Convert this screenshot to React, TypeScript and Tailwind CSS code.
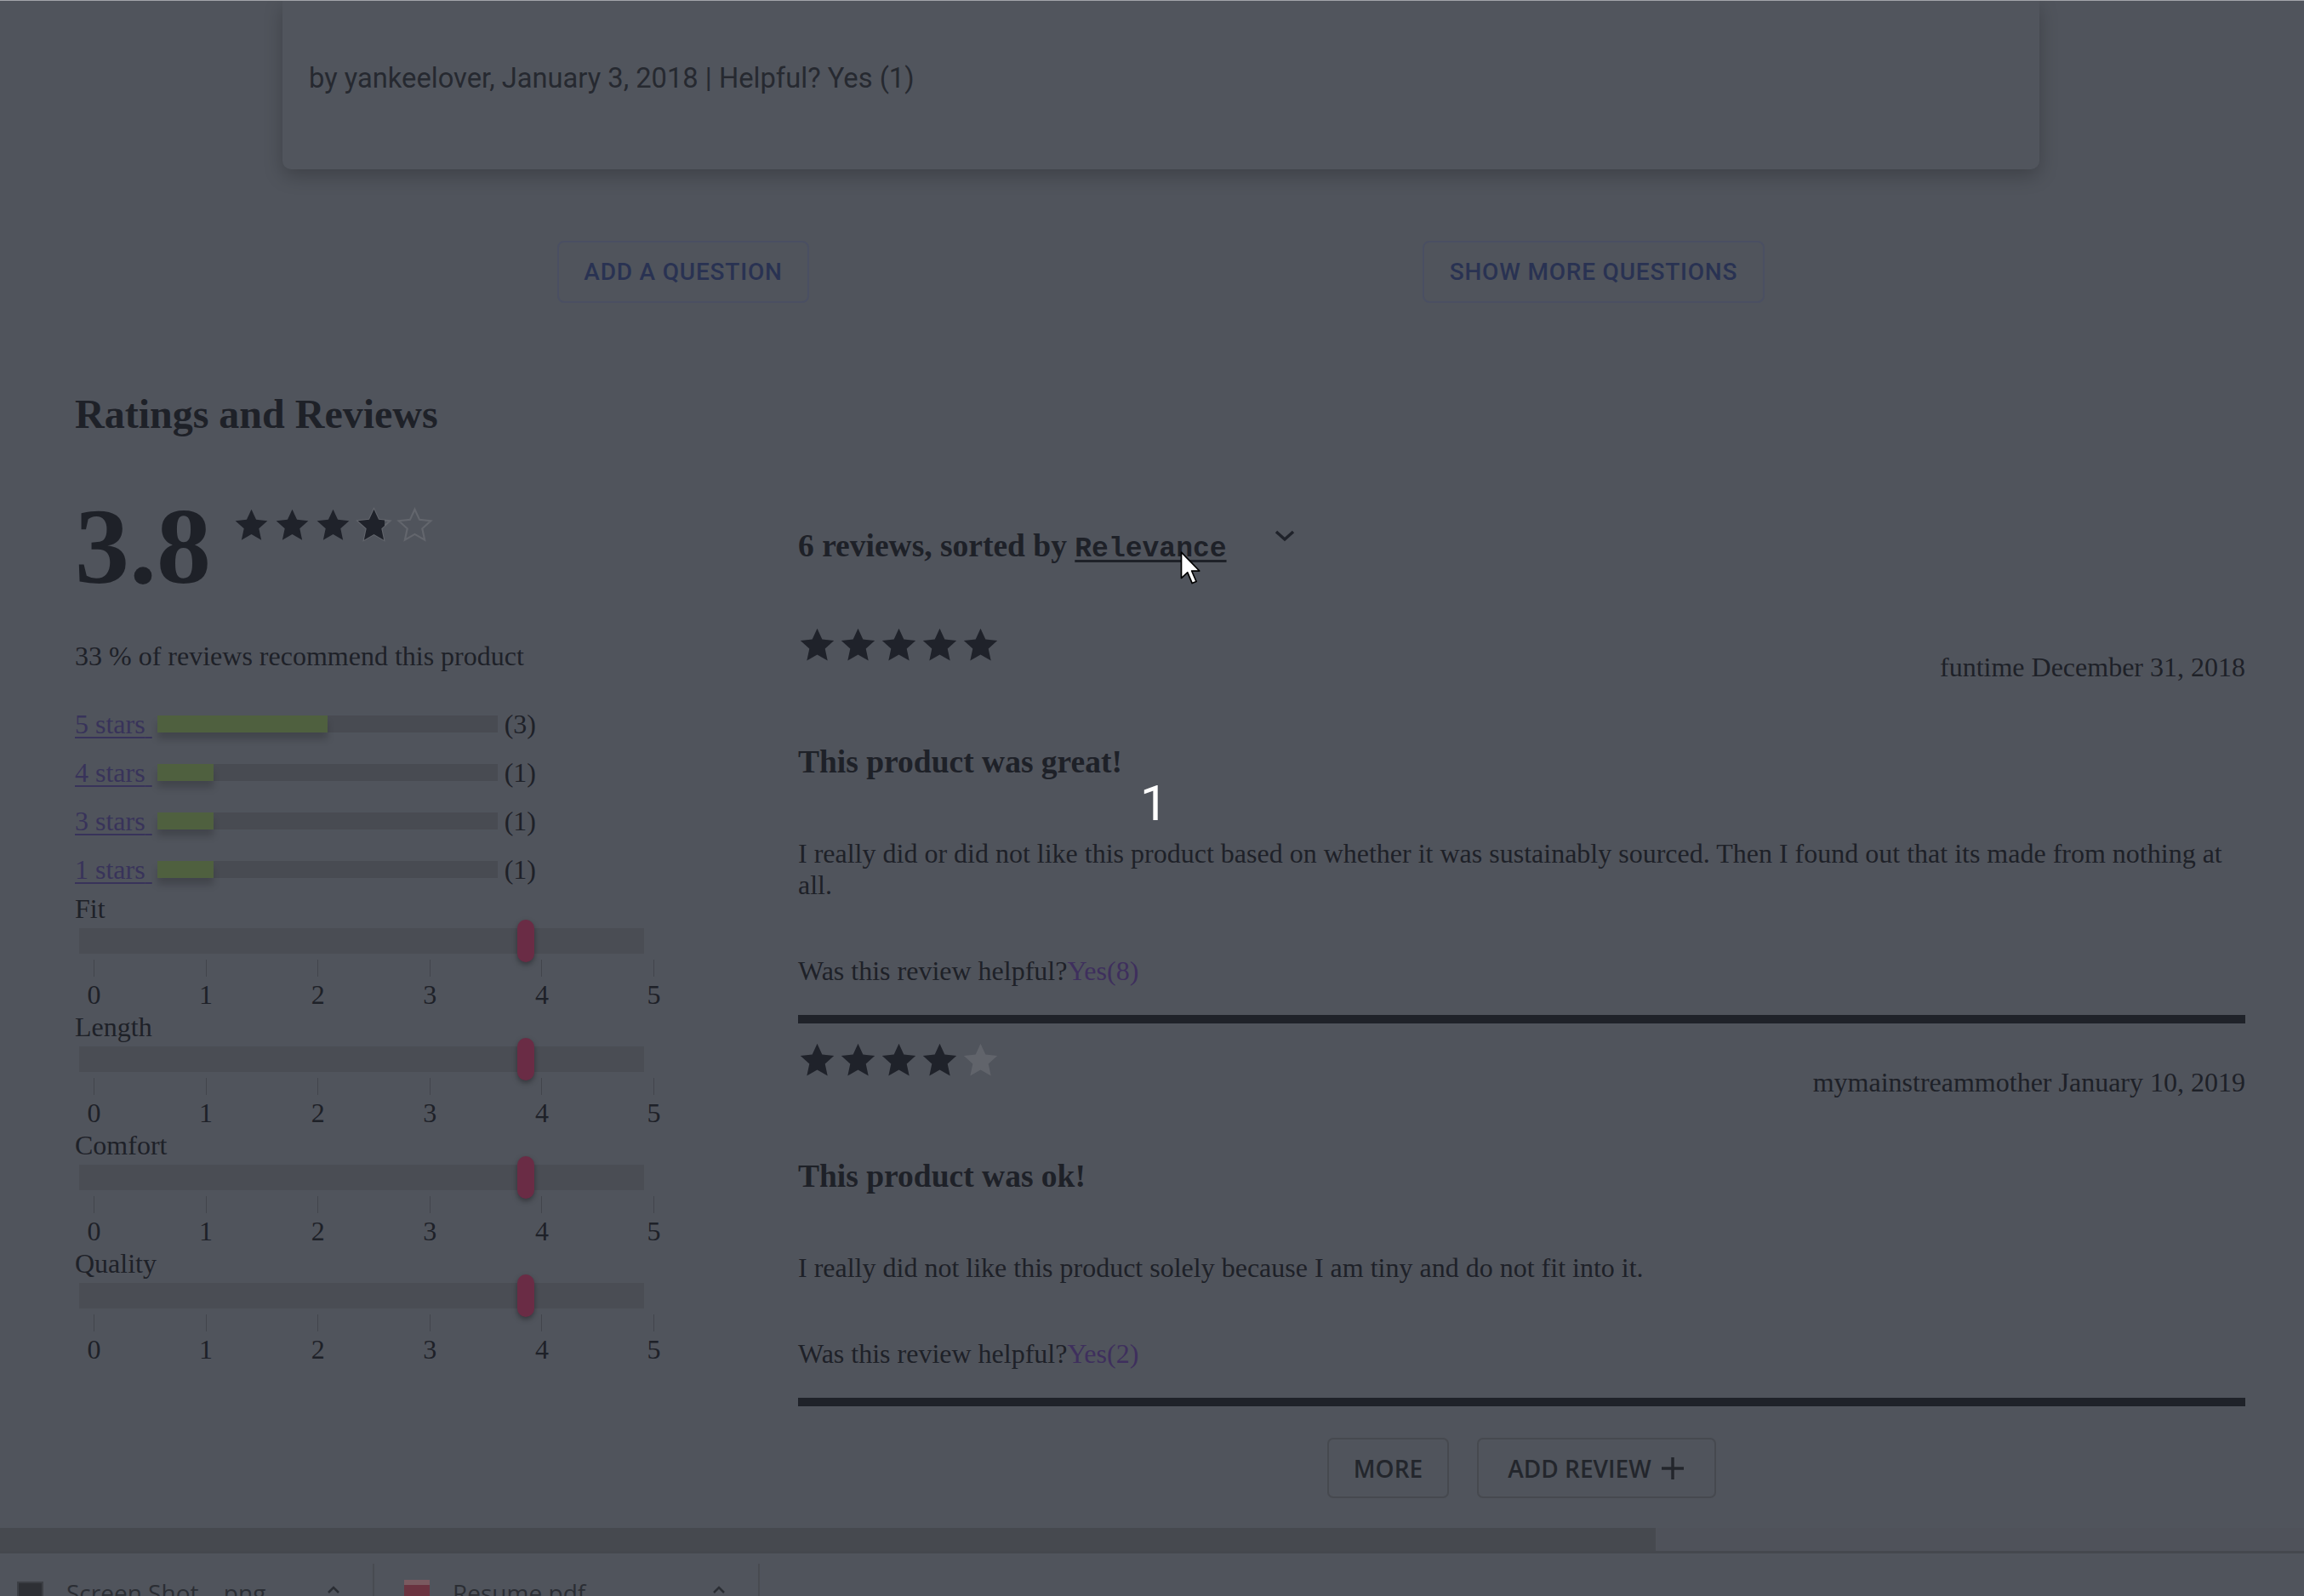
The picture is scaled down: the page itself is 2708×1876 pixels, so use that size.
import React from 'react';

const serif = "font-['Liberation_Serif',serif]";
const ink = '#1f222a';

function Star({ size, color, outline }: { size: number; color: string; outline?: boolean }) {
  return (
    <svg width={size} height={size} viewBox="0 0 24 24" className="block shrink-0">
      <polygon
        points="12,1.5 15.1,8.3 22.5,9.1 16.9,14.1 18.5,21.6 12,17.8 5.5,21.6 7.1,14.1 1.5,9.1 8.9,8.3"
        fill={outline ? 'none' : color}
        stroke={color}
        strokeWidth={outline ? 1.2 : 0}
      />
    </svg>
  );
}

function StarRow({ filled }: { filled: number }) {
  return (
    <div className="flex gap-[3px]">
      {[0, 1, 2, 3, 4].map((i) => (
        <Star key={i} size={45} color={i < filled ? ink : '#61646b'} />
      ))}
    </div>
  );
}

function BarRow({ label, pct, count }: { label: string; pct: number; count: number }) {
  return (
    <div className="h-[57px] flex items-center">
      <span className="underline decoration-[2px] underline-offset-[4px] text-[#38335a]">{label}&nbsp;</span>
      <div className="ml-[6px] w-[400px] h-[20px] bg-[#484b52]">
        <div className="h-full bg-[#4f603f] shadow-[0_8px_8px_rgba(0,0,0,0.18)]" style={{ width: `${pct}%` }} />
      </div>
      <span className="ml-[8px]">({count})</span>
    </div>
  );
}

function Slider({ label }: { label: string }) {
  return (
    <div className="w-[720px] mb-[1px]">
      <div className="h-[37px] leading-[37px]">{label}</div>
      <div className="relative mt-[4px] ml-[5px] w-[664px] h-[30px] bg-[#4a4d54]">
        <div className="absolute left-[515px] top-[-10px] w-[20px] h-[50px] rounded-full bg-[#6a2c45] shadow-[0_3px_6px_rgba(0,0,0,0.35)]" />
      </div>
      <div className="mt-[7px] ml-[22px] w-[659px] h-[20px] flex justify-between">
        {[0, 1, 2, 3, 4, 5].map((n) => (
          <div key={n} className="w-px h-full bg-[#42454c]" />
        ))}
      </div>
      <div className="mt-[3px] ml-[22px] w-[659px] h-[37px] leading-[37px] flex justify-between">
        {[0, 1, 2, 3, 4, 5].map((n) => (
          <div key={n} className="w-px flex justify-center">{n}</div>
        ))}
      </div>
    </div>
  );
}

function Review({ stars, who, title, body, yes, first }: { stars: number; who: string; title: string; body: React.ReactNode; yes: number; first?: boolean }) {
  return (
    <div>
      <div className={`h-[67px] flex justify-between ${first ? 'mt-[73px]' : 'mt-[21px]'}`}>
        <StarRow filled={stars} />
        <div className="self-end leading-[37px]">{who}</div>
      </div>
      <h3 className="mt-[70.5px] text-[37.5px] leading-[43px] font-bold">{title}</h3>
      <p className="mt-[68px] leading-[37px]">{body}</p>
      <div className="mt-[64px] leading-[37px]">
        Was this review helpful?<span className="text-[#3e2f5d]">Yes({yes})</span>
      </div>
      <div className="mt-[33px] h-[10px] bg-[#1f2229]" />
    </div>
  );
}

export default function App() {
  return (
    <div className="w-[2708px] h-[1876px] flex flex-col overflow-hidden bg-[#50545c] border-t border-[#a3a5aa] relative">
      <div className="flex-1 overflow-hidden">
        {/* question card (scrolled up) */}
        <div className="ml-[332px] w-[2065px] h-[198px] rounded-b-[10px] bg-[#51555d] shadow-[0_8px_22px_rgba(0,0,0,0.22)] pt-[73px] pl-[31px] font-['Roboto',sans-serif] text-[32.7px] leading-[37px] text-[#262930]">
          by yankeelover, January 3, 2018 | Helpful? Yes (1)
        </div>

        <div className="mt-[84px] flex font-['Roboto',sans-serif] font-medium text-[28px] tracking-[0.8px] text-[#293252]">
          <button className="ml-[655px] w-[296px] h-[73px] rounded-[8px] border-2 border-[#4a4f62]">ADD A QUESTION</button>
          <button className="ml-[721px] w-[402px] h-[73px] rounded-[8px] border-2 border-[#4a4f62]">SHOW MORE QUESTIONS</button>
        </div>

        <div className={`${serif} text-[32px] text-[#1e2128] pl-[88px]`}>
          <h2 className="mt-[103px] text-[48px] leading-[56px] font-bold">Ratings and Reviews</h2>

          <div className="flex">
            {/* left column */}
            <div className="w-[850px] shrink-0">
              <div className="mt-[63px] flex items-start">
                <span className="text-[128px] leading-[128px] font-bold">3.8</span>
                <div className="ml-[26px] mt-[18px] flex gap-[5px]">
                  <Star size={43} color={ink} />
                  <Star size={43} color={ink} />
                  <Star size={43} color={ink} />
                  <div className="relative w-[43px] h-[43px]">
                    <Star size={43} color="#63666d" outline />
                    <div className="absolute inset-y-0 left-0 w-[34px] overflow-hidden">
                      <Star size={43} color={ink} />
                    </div>
                  </div>
                  <Star size={43} color="#63666d" outline />
                </div>
              </div>

              <div className="mt-[47px] leading-[37px]">33 % of reviews recommend this product</div>

              <div className="mt-[32px]">
                <BarRow label="5 stars" pct={50} count={3} />
                <BarRow label="4 stars" pct={16.7} count={1} />
                <BarRow label="3 stars" pct={16.7} count={1} />
                <BarRow label="1 stars" pct={16.7} count={1} />
              </div>

              <Slider label="Fit" />
              <Slider label="Length" />
              <Slider label="Comfort" />
              <Slider label="Quality" />
            </div>

            {/* right column */}
            <div className="w-[1701px] shrink-0">
              <div className="mt-[105px] h-[43px] flex items-start">
                <h3 className="text-[37.5px] leading-[43px] font-bold whitespace-pre">
                  6 reviews, sorted by{' '}
                  <span className="font-['Liberation_Mono',monospace] text-[33px] underline decoration-[3px] underline-offset-[4px]">Relevance</span>
                </h3>
                <svg width="24" height="14" viewBox="0 0 24 14" className="ml-[56px] mt-[3px]">
                  <polyline points="2,2 12,11 22,2" fill="none" stroke={ink} strokeWidth="3.5" />
                </svg>
              </div>

              <Review
                first
                stars={5}
                who="funtime December 31, 2018"
                title="This product was great!"
                body={
                  <>
                    I really did or did not like this product based on whether it was sustainably sourced. Then I found out that its made from nothing at
                    <br />
                    all.
                  </>
                }
                yes={8}
              />
              <Review
                stars={4}
                who="mymainstreammother January 10, 2019"
                title="This product was ok!"
                body="I really did not like this product solely because I am tiny and do not fit into it."
                yes={2}
              />

              <div className="mt-[37px] flex justify-center gap-[33px] font-['Open_Sans',sans-serif] font-semibold text-[28px] text-[#23262c]">
                <button className="w-[143px] h-[71px] rounded-[7px] border-2 border-[#46494f]">MORE</button>
                <button className="w-[281px] h-[71px] rounded-[7px] border-2 border-[#46494f] flex items-center justify-center gap-[10px]">
                  ADD REVIEW
                  <svg width="30" height="30" viewBox="0 0 30 30">
                    <path d="M15 2 V28 M2 15 H28" stroke="#23262c" strokeWidth="3.5" />
                  </svg>
                </button>
              </div>
            </div>
          </div>
        </div>
      </div>

      {/* horizontal scrollbar */}
      <div className="h-[27px] flex bg-[#4f525a]">
        <div className="w-[1946px] bg-[#46494f]" />
      </div>
      <div className="h-[3px] bg-[#45484e]" />

      {/* downloads shelf */}
      <div className="h-[50px] flex overflow-hidden bg-[#50545c] font-['Open_Sans',sans-serif] text-[28px] text-[#2b2e34]">
        <div className="w-[440px] flex items-start border-r-2 border-[#484b51] mt-[12px]">
          <div className="ml-[20px] mt-[21px] w-[31px] h-[40px] border-2 border-[#3c3f45] bg-[#2e3035]" />
          <span className="ml-[27px] mt-[16px] leading-[37px]">Screen Shot....png</span>
          <svg width="16" height="10" viewBox="0 0 16 10" className="ml-auto mr-[38px] mt-[26px]">
            <polyline points="2,8 8,2 14,8" fill="none" stroke="#2b2e34" strokeWidth="2.5" />
          </svg>
        </div>
        <div className="w-[453px] flex items-start border-r-2 border-[#484b51] mt-[12px]">
          <div className="ml-[35px] mt-[19px] w-[30px] h-[40px] bg-[#6a3340] border-t-[6px] border-[#7a5a60]" />
          <span className="ml-[27px] mt-[16px] leading-[37px]">Resume.pdf</span>
          <svg width="16" height="10" viewBox="0 0 16 10" className="ml-auto mr-[38px] mt-[26px]">
            <polyline points="2,8 8,2 14,8" fill="none" stroke="#2b2e34" strokeWidth="2.5" />
          </svg>
        </div>
      </div>

      {/* overlay digit and mouse cursor */}
      <div className="absolute left-[1340px] top-[914px] font-['Roboto',sans-serif] text-[58px] leading-none text-white">1</div>
      <svg width="26" height="40" viewBox="0 0 21 33" className="absolute left-[1387px] top-[647px]">
        <path d="M1 1 L1 26 L7 20.5 L11.5 31 L15.5 29.3 L11 19 L18.5 19 Z" fill="white" stroke="black" strokeWidth="1.4" strokeLinejoin="round" />
      </svg>
    </div>
  );
}
